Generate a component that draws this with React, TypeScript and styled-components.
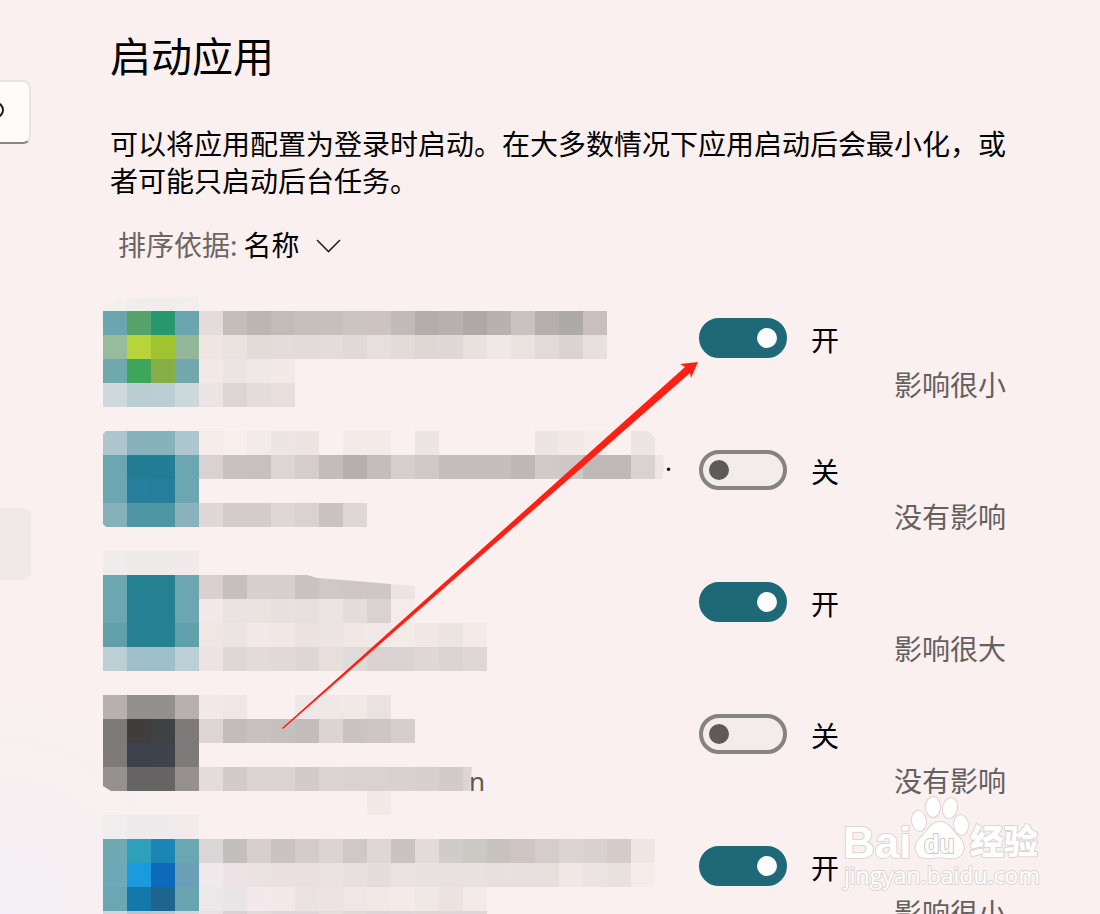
import React from "react";
import styled, { createGlobalStyle } from "styled-components";

const GlobalStyle = createGlobalStyle`
  * { box-sizing: border-box; }
  body {
    margin: 0;
    background: #f9f0ef;
    color: #000;
    font-family: "Noto Sans", "Noto Sans CJK SC", sans-serif;
    font-size: 28px;
    line-height: 37px;
  }
`;

const Page = styled.div`
  position: relative;
  display: flex;
  height: 100vh;
  overflow: hidden;
  background: radial-gradient(circle at 0 100%, #f3f0f7 0, #f6f0f4 70px, #f9f0f0 190px, #f9f0ef 300px);
`;

const Rail = styled.nav`
  flex: 0 0 103px;
  display: flex;
  flex-direction: column;
  align-items: flex-start;
  gap: 364px;
  padding-top: 80px;
`;

const SearchButton = styled.button`
  width: 31px;
  height: 64px;
  padding: 0;
  display: flex;
  align-items: center;
  border: 2px solid #ebe3e3;
  border-left: 0;
  border-bottom-color: #8b8686;
  border-radius: 0 8px 8px 0;
  background: #fdfcfa;
`;

const RailItem = styled.a`
  width: 31px;
  height: 72px;
  border-radius: 0 8px 8px 0;
  background: #f1e8e8;
`;

const Main = styled.main`
  flex: 1;
  min-width: 0;
  padding: 30px 92px 0 0;
`;

const Heading = styled.header`
  padding-left: 7px;
`;

const Title = styled.h1`
  margin: 0;
  font-size: 41px;
  line-height: 52px;
  font-weight: 400;
`;

const Intro = styled.p`
  margin: 0;
  padding-top: 44px;
`;

const SortBar = styled.div`
  display: flex;
  align-items: center;
  padding: 27px 0 23px 8px;
`;

const SortLabel = styled.label`
  color: #6b6665;
`;

const SelectWrap = styled.div`
  display: flex;
  align-items: center;
  padding-left: 6px;
`;

const Select = styled.select`
  appearance: none;
  width: 98px;
  margin-right: -26px;
  padding: 0;
  border: 0;
  background: transparent;
  color: #000;
  font: inherit;
`;

const Chevron = styled.svg`
  pointer-events: none;
`;

const List = styled.ul`
  position: relative;
  margin: 0;
  padding: 0;
  list-style: none;
`;

const Row = styled.li`
  display: flex;
  height: 132px;
`;

const Mosaic = styled.svg<{ $inset: number }>`
  display: block;
  flex: none;
  margin-top: ${(p) => p.$inset}px;
`;

const AppInfo = styled.div`
  flex: 1;
  min-width: 0;
`;

const Controls = styled.div`
  flex: 0 0 309px;
  padding-top: 31px;
`;

const SwitchLabel = styled.label`
  display: flex;
  align-items: flex-start;
  gap: 24px;
  height: 49px;
`;

const Switch = styled.input`
  appearance: none;
  flex: none;
  width: 88px;
  height: 40px;
  margin: 0;
  padding: 6px;
  border: 4px solid #878382;
  border-radius: 20px;
  background: #f3ecec;
  display: flex;

  &::before {
    content: "";
    width: 20px;
    height: 20px;
    border-radius: 50%;
    background: #5f5a5a;
  }

  &:checked {
    justify-content: flex-end;
    border-color: #1e6977;
    background: #1e6977;
  }

  &:checked::before {
    background: #fff;
  }
`;

const State = styled.span`
  padding-top: 4px;
`;

const Impact = styled.p`
  margin: 0;
  padding-right: 2px;
  text-align: right;
  color: #656060;
`;

const Arrow = styled.svg`
  position: absolute;
  top: 0;
  left: 0;
  pointer-events: none;
`;

const Watermark = styled.svg`
  position: absolute;
  right: 50px;
  bottom: 20px;
  pointer-events: none;
`;

const CELL = 24;

type App = {
  name: string;
  on: boolean;
  impact: string;
  inset: number;
  clip: string;
  cells: string[];
  tail?: { text: string; x: number; y: number; fill: string };
};

const apps: App[] = [
  {
    name: "应用 1",
    on: true,
    impact: "影响很小",
    inset: 0,
    clip: "M0 21Q5 14 24 12L96 9V24H504V72H192V120H0Z",
    cells: [
      "f3efed f1edec f0eded f3eeee",
      "6ba6b0 55a36a 289870 6ba6b0 e4dcdb c3beba bcb6b3 c2bcb8 c5c0bc c5c0bc cbc5c2 cdc4c2 c0bab9 b3adac b7b1b0 aea8a7 b7b2b1 c8c2c1 b4aead aeaaa8 c8bfbe",
      "98bb9d b9d33a a0c330 94b698 efe6e4 e9e2df e2dcd9 e3dcda e2dbd9 e3dcda e0d9d7 e6dedf e2dbd8 dfd7d4 e0d8d8 e9e1de f0e8e7 eae2df e2dada dbd3d2 e7e0df",
      "6fa8ad 3ea65a 86ae47 72a7ab f2e9e7 ece4e2 f0e8e6 f3eae8",
      "cfd9db bacdd3 bbced4 cdd8da ede4e5 ddd5d5 e5dddb e8dfdd",
    ],
  },
  {
    name: "应用 2",
    on: false,
    impact: "没有影响",
    inset: 12,
    clip: "M3 0H545L552 7V24H560L561 36L559 48H552V96H3L0 93V3Z",
    cells: [
      "adc6cf 85b2bb 85b2bb adc6cf f5ebe8 f8eeec f3eaeb ede4e5 ede4e2 - f4ebe9 f4ebe9 - ede5e3 - - - - ede5e3 f3eae8 f6edeb - ede5e3",
      "6ca6b0 237d95 237d96 6ca6b0 dad1d1 c7c2c1 c6c0bf ddd4d4 d5cccc c2bcbb b5afae c3bdbc d5cfce d0c8c8 c4bebe c4bebe c4bebe bdb7b6 d0cac9 cfc7c7 beb8b7 beb8b7 d9d2d2 eee5e4",
      "6ca6b0 277f9d 257e9c 6ca6b0",
      "85b2ba 4f96a4 4f96a4 8ab2bd e0d7d8 d4cccc d4cccb dfd6d6 dad2d2 cbc3c3 dfd6d6",
    ],
    tail: { text: ".", x: 562, y: 40, fill: "#000" },
  },
  {
    name: "应用 3",
    on: true,
    impact: "影响很大",
    inset: 0,
    clip: "M0 0H96V24H204L214 27L240 29L288 33L312 35V72H384V120H0Z",
    cells: [
      "f0eceb efebeb efebeb f0ebea",
      "6ca6b0 258092 258092 6ca6b0 dad0d0 c5bfbe d6d0cf d6d0cf cac1c1 cec8c8 cfc6c6 cdc7c6 ece3e3",
      "6ca6b0 258092 258092 6ca6b0 f2e8e8 eae2e1 eae2df e8e0df e7dfdf ebe3e4 e3dedd dad1d1 f5ebe9",
      "60a0aa 258092 258092 60a0aa f0e6e4 ece4e4 f3e9e9 f1e8e6 ece3e0 ece4e5 f1e8e5 f1e9e7 f4ebe8 f1e8e5 ece4e1 f4ebe9",
      "bccfd5 9fc0ca 9fc0ca bccfd5 ece3e2 dfd7d6 e3dbda e1d9d7 dcd7d5 e8dedc dfdbda dbd3d2 dad3d3 dfd7d6 dbd4d4 dfd7d7",
    ],
  },
  {
    name: "应用 4",
    on: false,
    impact: "没有影响",
    inset: 12,
    clip: "M0 0H312V72H369L367 96H288V120H264V96H8L0 91Z",
    cells: [
      "b6b0b0 949090 949090 b6b0b0 f2e9e8 efe6e5 - - f0e8e6 f0e8e5 f1e9e6 eae2e0",
      "7e7a7a 3f3e3c 3f4243 7e7a7a ddd4d4 c2bcbb c7c1c0 c5bfbe c2bcbb dcd4d4 c9c4c3 cec6c6 d6cdce",
      "7e7a7a 3c434c 40434b 7e7a7a",
      "969191 676465 676465 969190 e4dbdb d2cbca dcd4d4 dcd4d4 d3cbca dcd4d4 dad2d2 dad1d1 d9d0d1 d8d0d0 d3cbca ddd5d4",
      "- - - - - - - - - - - f3eae8",
    ],
    tail: { text: "n", x: 366, y: 96, fill: "#5f5a5a" },
  },
  {
    name: "应用 5",
    on: true,
    impact: "影响很小",
    inset: 0,
    clip: "M0 0H552V120H0Z",
    cells: [
      "f1eced efebed efebed f1eceb",
      "6fa9b4 2da1bb 1b85b3 6ba6b3 dad5d6 c4bfbf d7cece c9c4c3 d4cbcb dcd4d3 cec8c7 dfd7d7 c9c4c3 e3dbda d0cccb ccc8c3 c7c2bd cfc6c4 d5cdcb dcd4d2 d9d1cf d5ccca efe6e4",
      "6caab9 1b9ae0 0d6abb 6b9fb7 efe9eb ede3e6 eae1e1 e9e0df e9e0df ebe2e2 e8dfdf e5dcde ebe3e1 e9e1df e8e0e1 e7e1df e8e0de e7dfdd e7dfdc f1e8e5 ece4e2 e9e1de f5ebe9",
      "6ba6b3 1578ab 1d658e 69a5b0 ece8e9 e9e5e6 f3e9ec f2e8e8 ebe3e2 ede3e4 f0e6e7 f2e8e6 f4ebe9 f0e8e5 ece3e1 f4ebe9",
      "ccd8df adc8d3 b2ccd3 ccd8dd e8e2e4 d8d2d4 e0dadb dfd6da dfd6da e6dddf e1d8da ddd4d8 dfd6da e0d7d6 dfd6da dfd6da",
    ],
  },
];

function AppMosaic({ app, id }: { app: App; id: string }) {
  return (
    <Mosaic $inset={app.inset} width={576} height={120} shapeRendering="crispEdges" aria-hidden="true">
      <clipPath id={id}>
        <path d={app.clip} />
      </clipPath>
      <g clipPath={`url(#${id})`}>
        {app.cells.map((line, r) =>
          line.split(" ").map((c, i) =>
            c === "-" ? null : (
              <rect key={`${r}-${i}`} x={i * CELL} y={r * CELL} width={CELL} height={CELL} fill={`#${c}`} />
            )
          )
        )}
      </g>
      {app.tail && (
        <text x={app.tail.x} y={app.tail.y} fill={app.tail.fill} fontSize={26}>
          {app.tail.text}
        </text>
      )}
    </Mosaic>
  );
}

function BaiduMark() {
  return (
    <Watermark width={210} height={104} viewBox="840 790 210 104" aria-hidden="true">
      <g fill="#fff" stroke="#ddd4d4" strokeWidth={2} paintOrder="stroke" strokeLinejoin="round">
        <text x={843} y={858} fontSize={44} fontWeight={700} fontFamily="Liberation Sans, sans-serif">Bai</text>
        <ellipse cx={919} cy={821} rx={7} ry={10} transform="rotate(-8 919 821)" />
        <ellipse cx={933} cy={807} rx={7} ry={10} />
        <ellipse cx={950} cy={808} rx={7} ry={10} transform="rotate(12 950 808)" />
        <ellipse cx={961} cy={825} rx={7} ry={10} transform="rotate(-6 961 825)" />
        <path d="M940 822C948 822 951 829 956 834C962 840 965 844 963 851C961 858 954 859 948 858C942 857 937 857 932 858C925 859 918 858 916 851C914 844 919 839 924 834C929 829 932 822 940 822Z" />
        <text x={970} y={854} fontSize={34} fontWeight={900} fontFamily="Noto Sans CJK SC, sans-serif">经验</text>
        <text x={844} y={884} fontSize={23} fontWeight={500} fontFamily="Open Sans, sans-serif">jingyan.baidu.com</text>
        <text x={924} y={853} fontSize={25} fontWeight={700} stroke="#cfc6c6" fontFamily="Liberation Sans, sans-serif">du</text>
      </g>
    </Watermark>
  );
}

export default function App() {
  return (
    <>
      <GlobalStyle />
      <Page>
        <Rail>
          <SearchButton aria-label="搜索">
            <svg width={8} height={20} viewBox="0 0 8 20" fill="none" stroke="#1a1a1a" strokeWidth={2}>
              <circle cx={-4} cy={8} r={7} />
            </svg>
          </SearchButton>
          <RailItem href="#apps" aria-label="应用" />
        </Rail>
        <Main>
          <Heading>
            <Title>启动应用</Title>
            <Intro>可以将应用配置为登录时启动。在大多数情况下应用启动后会最小化，或者可能只启动后台任务。</Intro>
            <SortBar>
              <SortLabel htmlFor="sort">排序依据:</SortLabel>
              <SelectWrap>
                <Select id="sort" defaultValue="name">
                  <option value="name">名称</option>
                </Select>
                <Chevron width={26} height={16} fill="none" stroke="#2a2828" strokeWidth={1.6}>
                  <path d="M1 2L12.500 13.500L24 2" />
                </Chevron>
              </SelectWrap>
            </SortBar>
          </Heading>
          <List id="apps">
            {apps.map((app, i) => (
              <Row key={app.name}>
                <AppInfo>
                  <AppMosaic app={app} id={`mosaic-${i}`} />
                </AppInfo>
                <Controls>
                  <SwitchLabel>
                    <Switch type="checkbox" role="switch" defaultChecked={app.on} />
                    <State>{app.on ? "开" : "关"}</State>
                  </SwitchLabel>
                  <Impact>{app.impact}</Impact>
                </Controls>
              </Row>
            ))}
            <Arrow as="svg" width={600} height={450} aria-hidden="true">
              <path d="M179 441L582 80L577 77L595 75L588 91L587 86L180 442Z" fill="#ff2013" />
            </Arrow>
          </List>
        </Main>
        <BaiduMark />
      </Page>
    </>
  );
}
